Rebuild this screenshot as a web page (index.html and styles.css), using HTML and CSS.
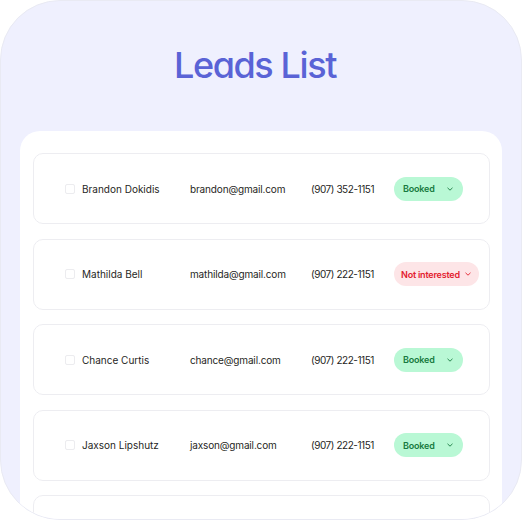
FILE: index.html
```html
<!DOCTYPE html>
<html>
<head>
<meta charset="utf-8">
<link rel="stylesheet" href="styles.css">
</head>
<body>
<div class="frame">
  <h1 class="title">Leads List</h1>
  <div class="card">
    <div class="row">
      <span class="check"></span>
      <span class="name">Brandon Dokidis</span>
      <span class="email">brandon@gmail.com</span>
      <span class="phone">(907) 352-1151</span>
      <span class="badge booked">Booked <svg class="chev" viewBox="0 0 6 4"><path d="M0.5 0.8 L3 3.2 L5.5 0.8"/></svg></span>
    </div>
    <div class="row">
      <span class="check"></span>
      <span class="name">Mathilda Bell</span>
      <span class="email">mathilda@gmail.com</span>
      <span class="phone">(907) 222-1151</span>
      <span class="badge nope">Not interested <svg class="chev" viewBox="0 0 6 4"><path d="M0.5 0.8 L3 3.2 L5.5 0.8"/></svg></span>
    </div>
    <div class="row">
      <span class="check"></span>
      <span class="name">Chance Curtis</span>
      <span class="email">chance@gmail.com</span>
      <span class="phone">(907) 222-1151</span>
      <span class="badge booked">Booked <svg class="chev" viewBox="0 0 6 4"><path d="M0.5 0.8 L3 3.2 L5.5 0.8"/></svg></span>
    </div>
    <div class="row">
      <span class="check"></span>
      <span class="name">Jaxson Lipshutz</span>
      <span class="email">jaxson@gmail.com</span>
      <span class="phone">(907) 222-1151</span>
      <span class="badge booked">Booked <svg class="chev" viewBox="0 0 6 4"><path d="M0.5 0.8 L3 3.2 L5.5 0.8"/></svg></span>
    </div>
    <div class="row"></div>
  </div>
</div>
</body>
</html>
```

FILE: styles.css
```css
* { box-sizing: border-box; }
html, body { margin: 0; padding: 0; background: #ffffff; }
body { font-family: Inter, "Noto Sans", sans-serif; }

.frame {
  width: 522px;
  height: 520px;
  border: 1px solid #e9eaf3;
  border-radius: 60px;
  background: #eff0fe;
  overflow: hidden;
  display: flex;
  flex-direction: column;
  padding-top: 46px;
}

.title {
  margin: 0 12px 48px 0;
  font-size: 36px;
  line-height: 36px;
  font-weight: 500;
  color: #5a63d6;
  text-align: center;
  letter-spacing: -1.4px;
  font-feature-settings: "cv11" 1;
}

.card {
  margin: 0 19px;
  background: #ffffff;
  border-radius: 20px;
  padding: 22px 12px 0 13px;
  display: flex;
  flex-direction: column;
  gap: 14.5px;
  flex: 1;
}

.row {
  height: 71px;
  flex: none;
  border: 1px solid #ededf1;
  border-radius: 10px;
  display: flex;
  align-items: center;
  padding-left: 31px;
  font-size: 10px;
  color: #1f1f24;
}

.check {
  width: 10px;
  height: 10px;
  border: 1px solid #ececef;
  border-radius: 2px;
  margin-right: 7px;
  flex: none;
}

.name { width: 108px; }
.email { width: 121px; letter-spacing: -0.15px; }
.phone { width: 83px; letter-spacing: -0.45px; }

.badge {
  height: 24px;
  border-radius: 12px;
  display: inline-flex;
  align-items: center;
  justify-content: space-between;
  padding: 0 10px 0 9px;
  font-size: 9px;
  font-weight: 600;
  gap: 5px;
  letter-spacing: -0.2px;
}

.booked {
  background: #b9f8d5;
  color: #177a40;
  min-width: 69px;
}

.nope {
  background: #fde5e7;
  color: #e3202e;
  padding: 0 8px 0 7px;
}

.chev {
  width: 6px;
  height: 4px;
  fill: none;
  stroke: currentColor;
  stroke-width: 0.9;
}
```
